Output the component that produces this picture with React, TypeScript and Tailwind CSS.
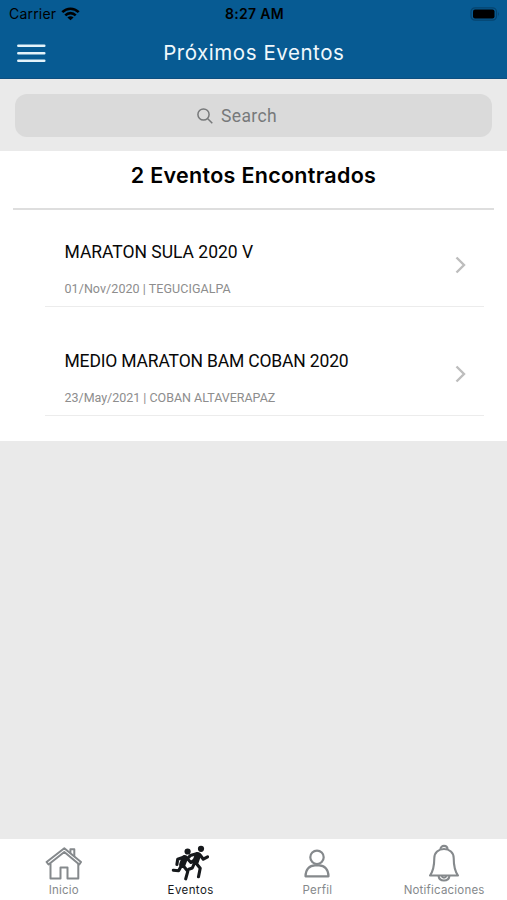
import type { ReactNode } from "react";

function StatusBar() {
  return (
    <div className="flex h-[27px] items-center justify-between pl-[9px] pr-[7px] font-['Inter',sans-serif] text-black">
      <div className="flex w-[120px] items-center gap-[5px]">
        <span className="whitespace-nowrap text-[14px] leading-[18px] tracking-[0.2px]">Carrier</span>
        <svg width="19" height="14" viewBox="0 0 19 14" fill="none" stroke="currentColor" strokeWidth="2.6">
          <path d="M1.3 5.2C6 .5 13 .5 17.7 5.2" />
          <path d="M4.3 8.3C7.2 5.4 11.8 5.4 14.7 8.3" />
          <path d="M9.5 13.3 6.4 10.4C8.2 8.8 10.8 8.8 12.6 10.4Z" fill="currentColor" stroke="none" />
        </svg>
      </div>
      <span className="whitespace-nowrap text-[14px] font-semibold leading-[18px] tracking-[0.3px]">8:27 AM</span>
      <div className="flex w-[120px] justify-end">
        <svg width="30" height="14" viewBox="0 0 30 14">
          <rect x="1" y=".8" width="25.5" height="12.4" rx="4" fill="none" stroke="#06446f" strokeWidth="1.2" />
          <rect x="3" y="2.5" width="21.5" height="9" rx="2" fill="#000" />
          <path d="M28 4.8q1.8 2.2 0 4.4z" fill="#06446f" />
        </svg>
      </div>
    </div>
  );
}

function EventRow({ title, detail, titleSpacing, detailSpacing }: { title: string; detail: string; titleSpacing: string; detailSpacing: string }) {
  return (
    <div className="ml-[45px] mr-[23px] flex h-[109px] justify-between border-b border-[#ececec] pl-[19.5px] pr-[18px]">
      <div className="flex flex-col gap-[18px] pt-[43px]">
        <span className={`whitespace-nowrap text-[17.5px] leading-[22px] text-[#080808] ${titleSpacing}`}>{title}</span>
        <span className={`whitespace-nowrap text-[12.5px] leading-[16px] text-[#8d8d8d] ${detailSpacing}`}>{detail}</span>
      </div>
      <svg className="mt-[58px]" width="12" height="18" viewBox="0 0 12 18" fill="none" stroke="#bdbdbd" strokeWidth="2.4">
        <path d="m2.5 1.5 7.5 7.5-7.5 7.5" />
      </svg>
    </div>
  );
}

function Tab({ label, active, spacing, children }: { label: string; active?: boolean; spacing: string; children: ReactNode }) {
  return (
    <div className={`flex flex-1 flex-col items-center pt-[4px] ${active ? "text-[#16191c]" : "text-[#85898c]"}`}>
      <div className="flex h-[39px] items-center justify-center">{children}</div>
      <span className={`whitespace-nowrap pl-px font-['Inter',sans-serif] text-[11.5px] leading-[17px] ${spacing}`}>{label}</span>
    </div>
  );
}

export default function App() {
  return (
    <div className="flex h-[900px] w-[507px] flex-col overflow-hidden bg-[#eaeaea] font-['Roboto',sans-serif]">
      <header className="h-[79px] shrink-0 border-b border-[#0d4f80] bg-[#075b93]">
        <StatusBar />
        <div className="flex h-[51px] items-center pl-[16.5px] pr-[17px]">
          <svg width="29" height="20" viewBox="0 0 29 20" stroke="#e4f3fa" strokeWidth="2.5" strokeLinecap="round">
            <path d="M1.3 2.8h26M1.3 10.2h26M1.3 17.7h26" />
          </svg>
          <h1 className="flex-1 whitespace-nowrap pr-[28px] text-center font-['Inter',sans-serif] text-[20.5px] leading-[26px] tracking-[0.55px] text-[#f0f8fc]">Próximos Eventos</h1>
        </div>
      </header>

      <div className="h-[72px] shrink-0 px-[15px] pt-[15px]">
        <div className="flex h-[43px] items-center justify-center gap-[8px] rounded-[12px] bg-[#dadada] pr-[33px] text-[#77797a]">
          <svg width="16" height="16" viewBox="0 0 16 16" fill="none" stroke="currentColor" strokeWidth="1.5">
            <circle cx="6.5" cy="6.5" r="5.6" />
            <path d="m10.5 10.5 4.8 4.8" />
          </svg>
          <span className="text-[17.5px] leading-[22px] tracking-[0.35px]">Search</span>
        </div>
      </div>

      <main className="flex h-[290px] shrink-0 flex-col bg-white">
        <h2 className="mx-[13px] h-[59px] shrink-0 whitespace-nowrap border-b-2 border-[#dedede] pt-[10px] text-center font-['Inter',sans-serif] text-[21.5px] font-semibold leading-[28px] tracking-[0.3px] text-black">2 Eventos Encontrados</h2>
        <div className="-mt-[12px]">
          <EventRow title="MARATON SULA 2020 V" detail="01/Nov/2020 | TEGUCIGALPA" titleSpacing="tracking-[-0.02px]" detailSpacing="tracking-[0.06px]" />
          <EventRow title="MEDIO MARATON BAM COBAN 2020" detail="23/May/2021 | COBAN ALTAVERAPAZ" titleSpacing="tracking-[-0.17px]" detailSpacing="tracking-[-0.02px]" />
        </div>
      </main>

      <div className="flex-1" />

      <nav className="flex h-[61px] shrink-0 bg-white">
        <Tab label="Inicio" spacing="tracking-[0.2px]">
          <svg width="38" height="36" viewBox="0 0 38 36" fill="none" stroke="currentColor" strokeWidth="2" strokeLinejoin="round" strokeLinecap="round">
            <path d="M6.5 19V33.6H16.5V22.5H23.5V33.6H34.3V19" />
            <path d="M2.6 17 20.3 3.2 37 17 35.3 19.5 20.3 7 4.5 19.5Z" />
            <path d="M26.4 7.5V4.2H30.3V11" />
          </svg>
        </Tab>
        <Tab label="Eventos" active spacing="tracking-[0.4px]">
          <svg width="38" height="36" viewBox="0 0 38 36" fill="none" stroke="currentColor" strokeLinecap="round" strokeLinejoin="round">
            <circle cx="16.6" cy="6.5" r="3.1" fill="currentColor" stroke="none" />
            <path d="M13.8 13.2 11.4 19.3" strokeWidth="6.4" />
            <path d="m12.5 12.2-5.8 2-.8 5.2M16.2 13.5l3.7 4 3.8-2.7M10.5 20.5 7.6 25.8l-5.3-.6M12 20.5l4.8 5.8L14.700 33.800" strokeWidth="3.1" />
            <circle cx="30" cy="3.8" r="3.1" fill="currentColor" stroke="none" />
            <path d="M26.9 10.2 24.5 16.800" strokeWidth="6.4" />
            <path d="m25.5 8.700-6.200 1.700-1.500 1.800M29.500 10.500l2.800 3.700 4.300-2.400M23.500 18l-2.200 5-3.500 1.200M24.700 17.800l4.500 5.500L27.500 31.800" strokeWidth="3.1" />
          </svg>
        </Tab>
        <Tab label="Perfil" spacing="tracking-[0.2px]">
          <svg width="28" height="30" viewBox="0 0 28 30" fill="none" stroke="currentColor" strokeWidth="2.2" className="ml-px mt-[2px]">
            <circle cx="14" cy="8.3" r="6.7" />
            <path d="M2.5 27.3c0-7 4-11 9.5-11h4c5.5 0 9.5 4 9.5 11Z" strokeLinejoin="round" />
          </svg>
        </Tab>
        <Tab label="Notificaciones" spacing="tracking-[0.2px]">
          <svg width="32" height="38" viewBox="0 0 32 38" fill="none" stroke="currentColor" strokeWidth="2.1" strokeLinejoin="round">
            <path d="M6.3 14c0-5.5 4.2-9 9.700-9s9.700 3.500 9.700 9c0 9 1 13 4.300 17.500H2c3.300-4.500 4.300-8.500 4.300-17.500Z" />
            <path d="M12.500 5.300c0-4.600 7-4.600 7 0M10.500 32c1 6 10 6 11 0M13.700 32c.7 2.200 3.900 2.200 4.600 0" />
          </svg>
        </Tab>
      </nav>
    </div>
  );
}
